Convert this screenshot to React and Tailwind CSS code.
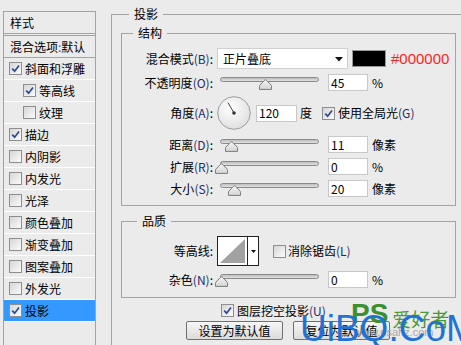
import React from 'react';

const font = { fontFamily: '"Noto Sans CJK SC", "Liberation Sans", sans-serif' };

const styles = [
  { name: '斜面和浮雕', checked: true },
  { name: '等高线', checked: true, sub: true },
  { name: '纹理', sub: true },
  { name: '描边', checked: true },
  { name: '内阴影' },
  { name: '内发光' },
  { name: '光泽' },
  { name: '颜色叠加' },
  { name: '渐变叠加' },
  { name: '图案叠加' },
  { name: '外发光' },
  { name: '投影', checked: true, active: true },
];

const Check = ({ checked }) => (
  <span className="flex h-[13px] w-[13px] shrink-0 items-center justify-center border border-[#8e8e8e] bg-gradient-to-br from-[#d6d6d6] to-[#fbfbfb]">
    {checked && (
      <svg width="9" height="9" viewBox="0 0 9 9">
        <path d="M1.2 4.6 L3.6 7.2 L8 1.4" fill="none" stroke="#2c4a9c" strokeWidth="1.7" />
      </svg>
    )}
  </span>
);

const Key = ({ k }) => <span className="text-[#1c2c70]">({k})</span>;

const Label = ({ text, k }) => (
  <div className="w-[91px] shrink-0 text-right">
    {text}
    {k && <Key k={k} />}:
  </div>
);

const Slider = ({ pos }) => (
  <div className="relative ml-[4px] h-[17px] w-[102px] shrink-0">
    <div className="absolute left-[3px] right-0 top-[3px] h-[5px] rounded-full border border-[#8a8a8a] bg-gradient-to-b from-[#bdbdbd] to-[#e2e2e2]" />
    <svg className="absolute top-[5px]" style={{ left: pos - 6 }} width="13" height="11" viewBox="0 0 13 11">
      <defs>
        <linearGradient id="th" x1="0" y1="0" x2="0" y2="1">
          <stop offset="0" stopColor="#f4f4f4" />
          <stop offset="1" stopColor="#d4d4d4" />
        </linearGradient>
      </defs>
      <path d="M6.5 0.8 Q7.2 0.8 8 1.8 L12.2 6.2 Q12.5 6.6 12.5 7.2 V10.4 H0.5 V7.2 Q0.5 6.6 0.8 6.2 L5 1.8 Q5.8 0.8 6.5 0.8 Z" fill="url(#th)" stroke="#7c7c7c" />
    </svg>
  </div>
);

const Field = ({ value, w = 'w-[40px]', ml = 'ml-[9px]' }) => (
  <div className={`${ml} ${w} flex h-[17px] shrink-0 items-center border border-[#c8c8c8] bg-white pl-[2px] leading-none`}>
    {value}
  </div>
);

const Group = ({ title, left, className, children }) => (
  <div className={`relative ml-[9px] w-[335px] border border-[#a3a3a3] ${className}`}>
    <span className="absolute top-[-10px] bg-[#ebebeb] px-[5px] leading-[17px]" style={{ left }}>
      {title}
    </span>
    {children}
  </div>
);

export default function App() {
  return (
    <div className="relative flex h-[345px] w-[461px] overflow-hidden bg-[#ebebeb] text-[12px] text-black" style={font}>
      {/* style list */}
      <div className="ml-[3px] mt-[11px] h-[334px] w-[93px] shrink-0 border-x border-t border-[#a3a3a3]">
        <div className="flex h-[22px] items-center border-b border-[#a3a3a3] pl-[6px]">样式</div>
        <div className="mt-[1px] flex h-[23px] items-center border-y border-[#a3a3a3] pl-[6px]">
          混合选项<span className="text-[#2a6fb0]">:</span>默认
        </div>
        {styles.map((s) => (
          <div
            key={s.name}
            className={`flex h-[22px] items-center gap-[3px] border-b border-white ${s.sub ? 'pl-[19px]' : 'pl-[5px]'} ${s.active ? 'bg-[#3399ff]' : ''}`}
          >
            <Check checked={s.checked} />
            <span>{s.name}</span>
          </div>
        ))}
      </div>

      {/* drop shadow panel */}
      <div className="relative ml-[15px] mt-[14px] w-[400px] shrink-0 border-l border-t border-[#a3a3a3]">
        <span className="absolute left-[17px] top-[-10px] bg-[#ebebeb] px-[5px] leading-[17px]">投影</span>

        <Group title="结构" left={11} className="mt-[18px] h-[173px]">
          <div className="flex flex-col pt-[14px]">
            <div className="flex h-[21px] items-center">
              <Label text="混合模式" k="B" />
              <div className="relative ml-[4px] flex h-[21px] w-[131px] items-center border border-[#d0d0d0] bg-white pl-[5px]">
                正片叠底
                <svg className="absolute right-[4px] top-[8px]" width="8" height="5" viewBox="0 0 8 5">
                  <path d="M0 0 H8 L4 4.5 Z" fill="#111" />
                </svg>
              </div>
              <div className="ml-[4px] h-[17px] w-[34px] border border-[#9a9a9a] bg-black" />
              <span className="ml-[5px] text-[15px] leading-none text-[#ff1f1f]" style={{ fontFamily: '"Liberation Sans", sans-serif' }}>
                #000000
              </span>
            </div>

            <div className="mt-[5px] flex h-[17px] items-center">
              <Label text="不透明度" k="O" />
              <Slider pos={48} />
              <Field value="45" />
              <span className="ml-[4px]">%</span>
            </div>

            <div className="mt-[5px] flex h-[34px] items-center">
              <Label text="角度" k="A" />
              <svg className="ml-[4px] shrink-0" width="34" height="34" viewBox="0 0 34 34">
                <defs>
                  <radialGradient id="dial" cx="0.4" cy="0.35" r="0.7">
                    <stop offset="0" stopColor="#ffffff" />
                    <stop offset="1" stopColor="#dedede" />
                  </radialGradient>
                </defs>
                <circle cx="17" cy="17" r="16.3" fill="url(#dial)" stroke="#9c9c9c" />
                <line x1="17" y1="17" x2="11" y2="6.6" stroke="#444" strokeWidth="1" />
                <circle cx="17" cy="17" r="1.8" fill="#333" />
              </svg>
              <Field value="120" w="w-[41px]" ml="ml-[5px]" />
              <span className="ml-[3px]">度</span>
              <span className="ml-[10px]">
                <Check checked />
              </span>
              <span className="ml-[3px]">
                使用全局光<Key k="G" />
              </span>
            </div>

            <div className="mt-[6px] flex h-[17px] items-center">
              <Label text="距离" k="D" />
              <Slider pos={14} />
              <Field value="11" />
              <span className="ml-[4px]">像素</span>
            </div>

            <div className="mt-[5px] flex h-[17px] items-center">
              <Label text="扩展" k="R" />
              <Slider pos={4} />
              <Field value="0" />
              <span className="ml-[4px]">%</span>
            </div>

            <div className="mt-[5px] flex h-[17px] items-center">
              <Label text="大小" k="S" />
              <Slider pos={17} />
              <Field value="20" />
              <span className="ml-[4px]">像素</span>
            </div>
          </div>
        </Group>

        <Group title="品质" left={15} className="mt-[15px] h-[77px]">
          <div className="flex flex-col pt-[14px]">
            <div className="flex h-[30px] items-center">
              <Label text="等高线" />
              <div className="ml-[4px] flex h-[30px] w-[42px] border border-[#222] bg-white">
                <svg width="29" height="28" viewBox="0 0 29 28">
                  <path d="M2 26 L27 2 V26 Z" fill="#a2a2a2" />
                </svg>
                <div className="flex flex-1 items-center justify-center border-l border-[#222]">
                  <svg width="5" height="3" viewBox="0 0 5 3">
                    <path d="M0 0 H5 L2.5 3 Z" fill="#111" />
                  </svg>
                </div>
              </div>
              <span className="ml-[14px]">
                <Check />
              </span>
              <span className="ml-[2px]">
                消除锯齿<Key k="L" />
              </span>
            </div>

            <div className="mt-[5px] flex h-[17px] items-center">
              <Label text="杂色" k="N" />
              <Slider pos={4} />
              <Field value="0" />
              <span className="ml-[4px]">%</span>
            </div>
          </div>
        </Group>

        <div className="mt-[5px] flex h-[15px] items-center gap-[3px] pl-[109px]">
          <Check checked />
          <span>
            图层挖空投影<Key k="U" />
          </span>
        </div>

        <div className="mt-[3px] flex gap-[10px] pl-[74px]">
          <button className="flex h-[19px] w-[97px] items-center justify-center rounded-[2px] border border-[#707070] bg-gradient-to-b from-[#f6f6f6] to-[#dcdcdc] text-[12px]">
            设置为默认值
          </button>
          <button className="flex h-[19px] w-[97px] items-center justify-center rounded-[2px] border border-[#707070] bg-gradient-to-b from-[#f6f6f6] to-[#dcdcdc] text-[12px]">
            复位为默认值
          </button>
        </div>
      </div>

      {/* watermark */}
      <div className="pointer-events-none absolute left-[351px] top-[300px] flex items-end whitespace-nowrap leading-none">
        <span className="text-[28px] font-bold text-[#3d8f2f]" style={{ fontFamily: '"Liberation Sans", sans-serif' }}>
          PS
        </span>
        <span className="ml-[4px] text-[19px] text-[#4a9a35]">爱好者</span>
      </div>
      <div className="pointer-events-none absolute left-[354px] top-[327px] whitespace-nowrap text-[11px] leading-none text-[#a8a8a8]" style={{ fontFamily: '"Liberation Sans", sans-serif' }}>
        www.psahz.com
      </div>
      <div className="pointer-events-none absolute left-[300px] top-[310px] whitespace-nowrap text-[37px] leading-none text-[#1f72d6]" style={{ fontFamily: '"Liberation Sans", sans-serif' }}>
        UiBQ.CoM
      </div>
    </div>
  );
}
